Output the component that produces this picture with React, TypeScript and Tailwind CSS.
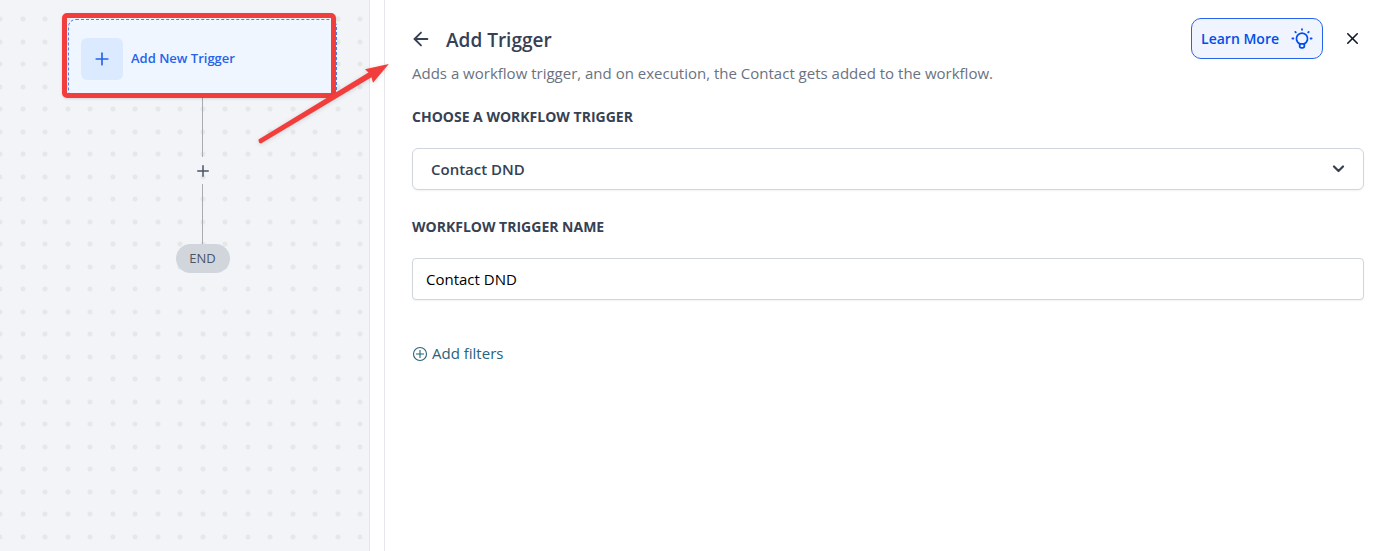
import React, { useState } from 'react';
import { ArrowLeft, Plus, X } from 'lucide-react';

const BulbIcon: React.FC = () => (
  <svg width="22" height="22" viewBox="0 0 22 22" fill="none" stroke="currentColor" strokeWidth="1.8" strokeLinecap="round" aria-hidden="true">
    <path d="M8.800 15.800a5.600 5.600 0 1 1 4.400 0" />
    <path d="M8.700 15.800h4.600v2.500a1.500 1.500 0 0 1-1.500 1.500h-1.600a1.500 1.500 0 0 1-1.500-1.500z" />
    <path d="M11 1.200v.6M1.400 10.500h1M19.600 10.500h1M4.300 3.900l.5.500M17.700 3.900l-.5.500" />
  </svg>
);

const ChevronIcon: React.FC = () => (
  <svg className="pointer-events-none absolute right-[19px] top-[17px]" width="13" height="8" viewBox="0 0 13 8" fill="none" stroke="#374151" strokeWidth="2.200" strokeLinecap="round" strokeLinejoin="round" aria-hidden="true">
    <path d="M2 1.500l4.500 4.500L11 1.500" />
  </svg>
);

const CirclePlusIcon: React.FC = () => (
  <svg className="mt-0.5" width="16" height="16" viewBox="0 0 16 16" fill="none" stroke="currentColor" strokeWidth="1.100" aria-hidden="true">
    <circle cx="8" cy="8" r="6.500" />
    <path d="M8 4v8M4 8h8" />
  </svg>
);

const WorkflowCanvas: React.FC = () => (
  <section
    aria-label="Workflow"
    className="relative w-[370px] shrink-0 border-r border-[#e3e5e9] bg-[#f2f4f7] bg-[radial-gradient(circle_at_11px_11px,#e6e7e7_2px,transparent_3px),radial-gradient(circle_at_34px_11px,#e6e7e7_2px,transparent_3px),radial-gradient(circle_at_11px_34px,#e6e7e7_2px,transparent_3px),radial-gradient(circle_at_34px_34px,#e6e7e7_2px,transparent_3px)] bg-[length:45px_45px] bg-[position:-11px_8px]"
  >
    <div className="ml-[68px] flex w-[269px] flex-col items-center pt-[19px]">
      <div className="relative w-full">
        <button
          type="button"
          className="flex h-[79px] w-full items-center gap-2 rounded-lg border border-dashed border-[#4f7fee] bg-[#eff6ff] px-3 text-[13px] font-semibold text-[#2563eb]"
        >
          <span className="flex size-[42px] items-center justify-center rounded-md bg-[#dbeafe]">
            <Plus size={20} strokeWidth={2} />
          </span>
          Add New Trigger
        </button>
        {/* Highlight frame */}
        <div className="pointer-events-none absolute -left-1.5 -top-1.5 h-[85px] w-[274px] rounded-[5px] border-[5px] border-[#f23d3d] shadow-sm" />
      </div>
      <div className="h-[59px] w-px bg-[#a9abb0]" />
      <button type="button" aria-label="Add action" className="flex h-[27px] w-7 items-center justify-center text-gray-600">
        <Plus size={18} strokeWidth={2} />
      </button>
      <div className="h-[60px] w-px bg-[#a9abb0]" />
      <div className="flex h-[29px] w-[54px] items-center justify-center rounded-full bg-gray-300 text-[13px] text-gray-600">
        END
      </div>
    </div>
    {/* Pointer from the canvas to the panel */}
    <svg className="pointer-events-none absolute left-[255px] top-[60px] z-10 drop-shadow-sm" width="140" height="90" viewBox="0 0 140 90" aria-hidden="true">
      <path d="M3.500 79.500L113.500 12.500L110 9.200L133.800 4L118 22.800L116.500 17.200L6 83.500Q3.500 83.500 3.500 79.500Z" fill="#f23d3d" />
    </svg>
  </section>
);

const TriggerPanel: React.FC = () => {
  const [trigger, setTrigger] = useState('Contact DND');
  const [name, setName] = useState('Contact DND');

  return (
    <main className="ml-3.5 min-w-0 flex-1 border-l border-gray-200 pl-[27px] pr-[22px] pt-[18px]">
      <header className="flex h-[41px] items-center pr-0.5">
        <button type="button" aria-label="Back" className="-ml-0.5 text-gray-700">
          <ArrowLeft size={22} strokeWidth={2} />
        </button>
        <h1 className="ml-3.5 pt-1 text-[19px] font-semibold text-gray-700">Add Trigger</h1>
        <a
          href="#learn-more"
          className="ml-auto flex h-[41px] items-center gap-3 rounded-[10px] border border-[#2563eb] bg-[#eff4ff] px-[9px] text-sm font-semibold text-[#004eeb]"
        >
          Learn More
          <BulbIcon />
        </a>
        <button type="button" aria-label="Close" className="ml-5 text-gray-900">
          <X size={19} strokeWidth={2} />
        </button>
      </header>
      <p className="mt-1 text-[15px] leading-5 text-gray-500">
        Adds a workflow trigger, and on execution, the Contact gets added to the workflow.
      </p>

      <form onSubmit={(e) => e.preventDefault()}>
        <label htmlFor="trigger" className="mt-6 block text-sm font-bold leading-5 text-gray-700">
          CHOOSE A WORKFLOW TRIGGER
        </label>
        <div className="relative mt-[21px]">
          <select
            id="trigger"
            value={trigger}
            onChange={(e) => setTrigger(e.target.value)}
            className="block h-[42px] w-full appearance-none rounded-md border border-gray-300 bg-white px-[18px] text-[15px] font-semibold text-gray-700 shadow-xs"
          >
            <option>Contact DND</option>
          </select>
          <ChevronIcon />
        </div>

        <label htmlFor="name" className="mt-[27px] block text-sm font-bold leading-5 text-gray-700">
          WORKFLOW TRIGGER NAME
        </label>
        <input
          id="name"
          type="text"
          value={name}
          onChange={(e) => setName(e.target.value)}
          className="mt-[21px] block h-[42px] w-full rounded border border-gray-300 bg-white px-[13px] text-[15px] text-black shadow-xs"
        />

        <button type="button" className="mt-[43px] flex items-center gap-1 text-[15px] leading-5 text-[#27637b]">
          <CirclePlusIcon />
          Add filters
        </button>
      </form>
    </main>
  );
};

const App: React.FC = () => {
  return (
    <div className="flex min-h-screen bg-white font-['Open_Sans','Noto_Sans',sans-serif]">
      <WorkflowCanvas />
      <TriggerPanel />
    </div>
  );
};

export default App;
